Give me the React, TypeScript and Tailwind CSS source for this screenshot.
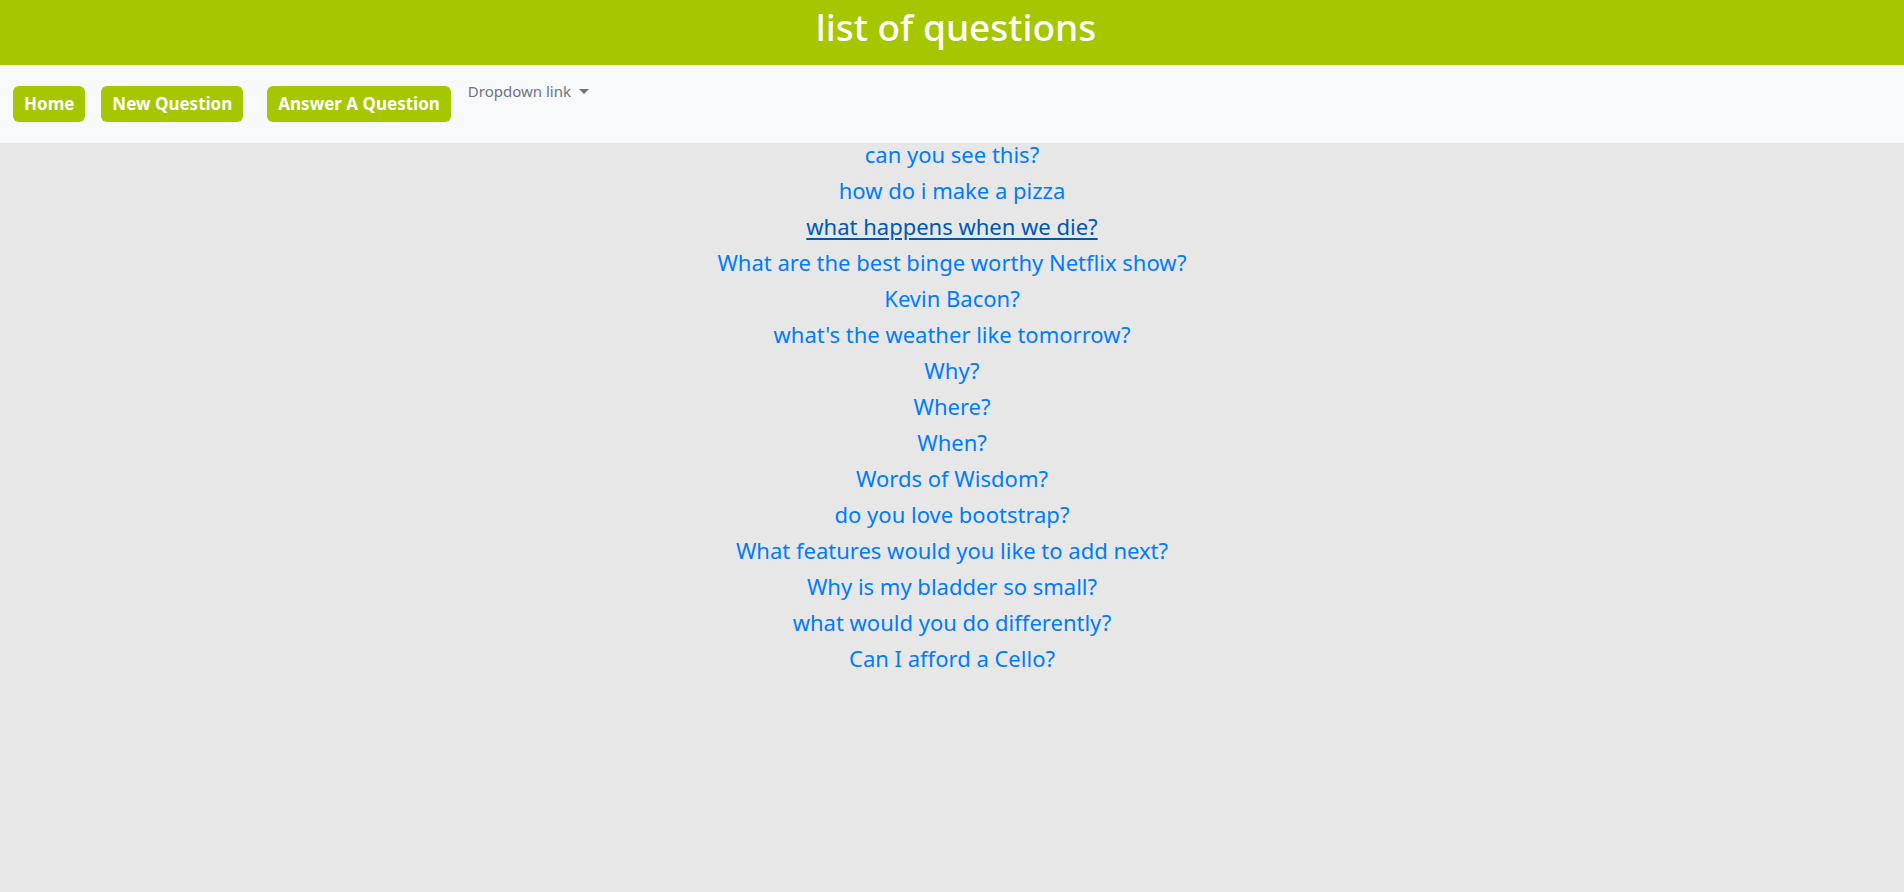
const questions = [
  "can you see this?",
  "how do i make a pizza",
  "what happens when we die?",
  "What are the best binge worthy Netflix show?",
  "Kevin Bacon?",
  "what's the weather like tomorrow?",
  "Why?",
  "Where?",
  "When?",
  "Words of Wisdom?",
  "do you love bootstrap?",
  "What features would you like to add next?",
  "Why is my bladder so small?",
  "what would you do differently?",
  "Can I afford a Cello?",
];

export default function App() {
  return (
    <div className="min-h-screen bg-[#e7e7e7] font-['Noto_Sans',sans-serif]">
      {/* Header */}
      <header className="h-[65px] bg-[#a6c600] flex items-center justify-center">
        <h1 className="text-[37px] leading-none font-medium text-white -mt-[13px] ml-[8px]">list of questions</h1>
      </header>

      {/* Nav */}
      <nav className="h-[78px] bg-[#f8f9fa] flex items-start pl-[13px] pt-[21px]">
        <a className="h-[36px] px-[11px] rounded-[6px] bg-[#a6c600] text-white font-bold text-[17px] flex items-center">
          Home
        </a>
        <a className="ml-[16px] h-[36px] px-[11px] rounded-[6px] bg-[#a6c600] text-white font-bold text-[17px] flex items-center">
          New Question
        </a>
        <a className="ml-[24px] h-[36px] px-[11px] rounded-[6px] bg-[#a6c600] text-white font-bold text-[17px] flex items-center">
          Answer A Question
        </a>
        <a className="ml-[17px] -mt-[6px] flex items-center gap-[8px] text-[15px] text-[#6c757d]">
          Dropdown link
          <span className="w-0 h-0 border-l-[5px] border-r-[5px] border-t-[5px] border-l-transparent border-r-transparent border-t-[#6c757d]" />
        </a>
      </nav>

      {/* Questions */}
      <ul className="flex flex-col items-center -mt-[7px]">
        {questions.map((q, i) => (
          <li key={q} className="leading-[36px] text-[22px]">
            <a
              className={
                i === 2
                  ? "text-[#0056b3] underline underline-offset-[3px]"
                  : "text-[#007bff]"
              }
            >
              {q}
            </a>
          </li>
        ))}
      </ul>
    </div>
  );
}
